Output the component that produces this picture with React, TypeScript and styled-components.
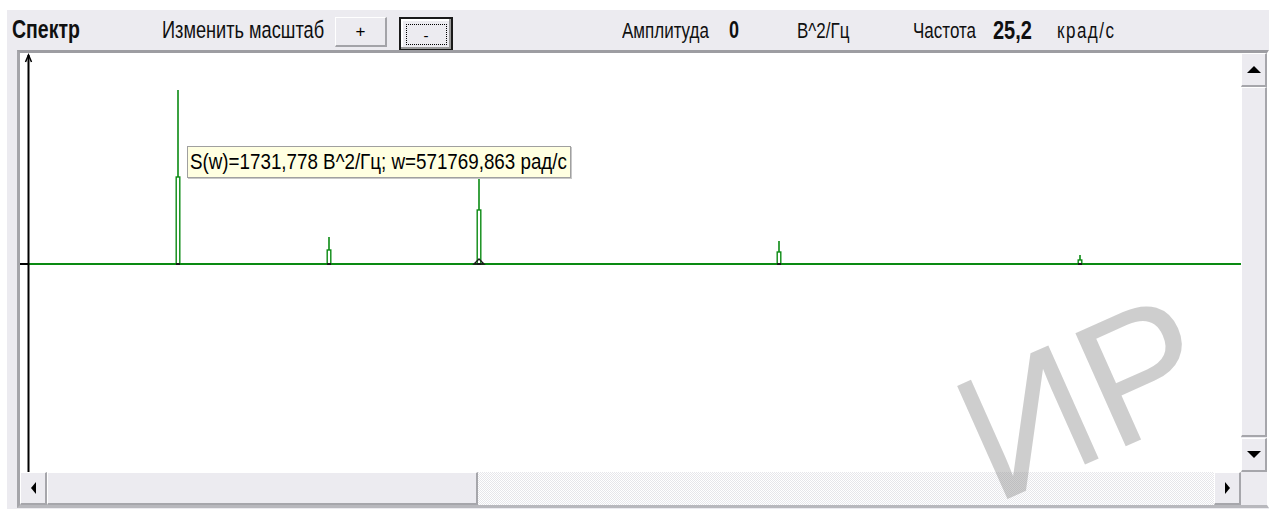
import React from "react";
import styled, { createGlobalStyle, css } from "styled-components";

const GlobalStyle = createGlobalStyle`
  html, body { margin: 0; padding: 0; background: #ffffff; }
  body { font-family: "Liberation Sans", Arial, sans-serif; }
  #root { width: 1269px; height: 509px; overflow: hidden; }
`;

const FACE = "#ecebf0";

const Page = styled.div`
  width: 1269px;
  height: 509px;
  padding: 10px 0 0 7px;
  box-sizing: border-box;
  background: #ffffff;
  position: relative;
  overflow: hidden;
`;

const Frame = styled.div`
  width: 1262px;
  height: 499px;
  background: ${FACE};
  display: flex;
  flex-direction: column;
`;

const Toolbar = styled.div`
  height: 40px;
  display: flex;
  align-items: center;
  padding-left: 5px;
  box-sizing: border-box;
`;

const Cell = styled.div<{ $w?: number }>`
  flex: 0 0 ${(p) => (p.$w ? `${p.$w}px` : "auto")};
  display: flex;
  align-items: center;
  height: 100%;
`;

const Text = styled.span<{ $bold?: boolean; $size?: number; $ls?: number }>`
  display: inline-block;
  font-size: ${(p) => p.$size ?? 17}px;
  font-weight: ${(p) => (p.$bold ? 700 : 400)};
  letter-spacing: ${(p) => p.$ls ?? 0}px;
  color: #101010;
  transform: scaleY(1.3);
  white-space: nowrap;
  line-height: 1;
`;

const ZoomButton = styled.button<{ $pressed?: boolean }>`
  flex: 0 0 auto;
  align-self: flex-start;
  margin-top: 7px;
  width: ${(p) => (p.$pressed ? 54 : 52)}px;
  height: ${(p) => (p.$pressed ? 34 : 30)}px;
  padding: 0;
  background: ${FACE};
  font-family: "Liberation Sans", Arial, sans-serif;
  font-size: 17px;
  color: #000;
  display: flex;
  align-items: center;
  justify-content: center;
  box-sizing: border-box;
  ${(p) =>
    p.$pressed
      ? css`
          border: 2px solid #1a1a1a;
          box-shadow: inset -2px -2px 0 #9a9a9a, inset 2px 2px 0 #ffffff;
        `
      : css`
          border: none;
          border-top: 1px solid #ffffff;
          border-left: 1px solid #ffffff;
          border-right: 2px solid #a3a3a8;
          border-bottom: 2px solid #a3a3a8;
        `}
`;

const FocusRing = styled.span`
  display: flex;
  align-items: center;
  justify-content: center;
  width: 41px;
  height: 21px;
  box-sizing: border-box;
  border: 1px dotted #000;
  font-size: 15px;
  line-height: 1;
  padding-top: 2px;
`;

const Panel = styled.div`
  margin-left: 10px;
  height: 458px;
  width: 1252px;
  box-sizing: border-box;
  border-top: 3px solid #9d9da2;
  border-left: 3px solid #a5a5aa;
  border-bottom: 3px solid #b8b8bd;
  border-right: 2px solid #ffffff;
  display: grid;
  grid-template-columns: 1221px 26px;
  grid-template-rows: 419px 33px;
  background: #ffffff;
`;

const PlotArea = styled.div`
  position: relative;
  background: #ffffff;
  overflow: hidden;
`;

const Hint = styled.div`
  position: absolute;
  left: 167px;
  top: 93px;
  height: 32px;
  padding: 0 3px 0 2px;
  background: #ffffe1;
  border: 1px solid #a0a0a0;
  box-shadow: 1px 1px 0 #c8c8c8;
  display: flex;
  align-items: center;
  box-sizing: border-box;
`;

const HintText = styled.span`
  display: inline-block;
  font-size: 18.8px;
  color: #000;
  white-space: nowrap;
  transform: scaleY(1.22);
  line-height: 1;
`;

const VScroll = styled.div`
  display: flex;
  flex-direction: column;
  background: ${FACE};
`;

const HScroll = styled.div`
  display: flex;
  background: repeating-conic-gradient(#ffffff 0 25%, #e6e6ea 0 50%) 0 0 / 2px 2px;
`;

const Corner = styled.div`
  background: ${FACE};
`;

const bevel = css`
  background: ${FACE};
  box-sizing: border-box;
  border-top: 1px solid #ffffff;
  border-left: 1px solid #ffffff;
  border-right: 2px solid #a6a6ab;
  border-bottom: 2px solid #a6a6ab;
`;

const ArrowButton = styled.div<{ $h?: number; $w?: number }>`
  ${bevel};
  flex: 0 0 auto;
  width: ${(p) => (p.$w ? `${p.$w}px` : "100%")};
  height: ${(p) => (p.$h ? `${p.$h}px` : "100%")};
  display: flex;
  align-items: center;
  justify-content: center;
`;

const Thumb = styled.div<{ $size: number; $vertical?: boolean }>`
  ${bevel};
  flex: 0 0 ${(p) => p.$size}px;
  ${(p) => (p.$vertical ? "width: 100%;" : "height: 100%;")}
`;

const Track = styled.div`
  flex: 1 1 auto;
`;

type Dir = "up" | "down" | "left" | "right";

const Arrow = styled.span<{ $dir: Dir }>`
  width: 0;
  height: 0;
  ${(p) => {
    switch (p.$dir) {
      case "up":
        return css`
          border-left: 7px solid transparent;
          border-right: 7px solid transparent;
          border-bottom: 7px solid #000;
        `;
      case "down":
        return css`
          border-left: 7px solid transparent;
          border-right: 7px solid transparent;
          border-top: 7px solid #000;
        `;
      case "left":
        return css`
          border-top: 6px solid transparent;
          border-bottom: 6px solid transparent;
          border-right: 5px solid #000;
        `;
      default:
        return css`
          border-top: 6px solid transparent;
          border-bottom: 6px solid transparent;
          border-left: 5px solid #000;
        `;
    }
  }}
`;

/* diagonal watermark laid over the whole form */
const Watermark = styled.div`
  position: absolute;
  left: 995px;
  top: 471px;
  transform: translateY(-72%) rotate(-24deg);
  transform-origin: 0 100%;
  font-family: "Liberation Sans", Arial, sans-serif;
  font-size: 180px;
  line-height: 0.72;
  color: rgba(120, 120, 120, 0.36);
  white-space: nowrap;
  pointer-events: none;
`;

const GREEN = "#0a8a12";
const BASE = 211;

type Peak = { x: number; top: number; body: number; foot?: boolean };

const peaks: Peak[] = [
  { x: 158, top: 37, body: 124 },
  { x: 309, top: 184, body: 197 },
  { x: 459, top: 112, body: 157, foot: true },
  { x: 759, top: 188, body: 199 },
  { x: 1060, top: 202, body: 207 },
];

const Spectrum: React.FC = () => (
  <svg width={1221} height={419} style={{ display: "block" }}>
    {/* zero line */}
    <line x1={0} y1={BASE} x2={1221} y2={BASE} stroke={GREEN} strokeWidth={2} />
    {/* amplitude axis */}
    <line x1={0} y1={BASE} x2={9} y2={BASE} stroke="#000" strokeWidth={2} />
    <line x1={8.5} y1={2} x2={8.5} y2={419} stroke="#000" strokeWidth={2} />
    <polyline points="5.5,9 8.5,2 11.5,9" fill="none" stroke="#000" strokeWidth={1.5} />
    {peaks.map((p) => (
      <g key={p.x}>
        <line x1={p.x} y1={p.top} x2={p.x} y2={p.body} stroke={GREEN} strokeWidth={1.6} />
        <rect
          x={p.x - 1.8}
          y={p.body}
          width={3.6}
          height={BASE - p.body}
          fill="#ffffff"
          stroke={GREEN}
          strokeWidth={1.4}
        />
        {p.foot && (
          <path
            d={`M${p.x - 5} ${BASE} L${p.x} ${BASE - 5} L${p.x + 5} ${BASE} Z`}
            fill="none"
            stroke="#1a1a1a"
            strokeWidth={1.4}
          />
        )}
        <line x1={p.x - 2} y1={BASE} x2={p.x + 2} y2={BASE} stroke="#1a1a1a" strokeWidth={2} />
      </g>
    ))}
  </svg>
);

export default function App() {
  return (
    <>
      <GlobalStyle />
      <Page>
        <Frame>
          <Toolbar>
            <Cell $w={150}>
              <Text $bold $size={19.5}>
                Спектр
              </Text>
            </Cell>
            <Cell $w={173}>
              <Text $size={18.2}>Изменить масштаб</Text>
            </Cell>
            <ZoomButton>+</ZoomButton>
            <Cell $w={12} />
            <ZoomButton $pressed>
              <FocusRing>-</FocusRing>
            </ZoomButton>
            <Cell $w={169} />
            <Cell $w={107}>
              <Text>Амплитуда</Text>
            </Cell>
            <Cell $w={68}>
              <Text $bold $size={18}>
                0
              </Text>
            </Cell>
            <Cell $w={116}>
              <Text>В^2/Гц</Text>
            </Cell>
            <Cell $w={80}>
              <Text>Частота</Text>
            </Cell>
            <Cell $w={64}>
              <Text $bold $size={20}>
                25,2
              </Text>
            </Cell>
            <Cell>
              <Text $ls={1.5}>крад/с</Text>
            </Cell>
          </Toolbar>
          <Panel>
            <PlotArea>
              <Spectrum />
              <Hint>
                <HintText>S(w)=1731,778 В^2/Гц; w=571769,863 рад/с</HintText>
              </Hint>
            </PlotArea>
            <VScroll>
              <ArrowButton $h={34}>
                <Arrow $dir="up" />
              </ArrowButton>
              <Thumb $vertical $size={350} />
              <Track />
              <ArrowButton $h={34}>
                <Arrow $dir="down" />
              </ArrowButton>
            </VScroll>
            <HScroll>
              <ArrowButton $w={27}>
                <Arrow $dir="left" />
              </ArrowButton>
              <Thumb $size={431} />
              <Track />
              <ArrowButton $w={27}>
                <Arrow $dir="right" />
              </ArrowButton>
            </HScroll>
            <Corner />
          </Panel>
        </Frame>
        <Watermark>ИР</Watermark>
      </Page>
    </>
  );
}
